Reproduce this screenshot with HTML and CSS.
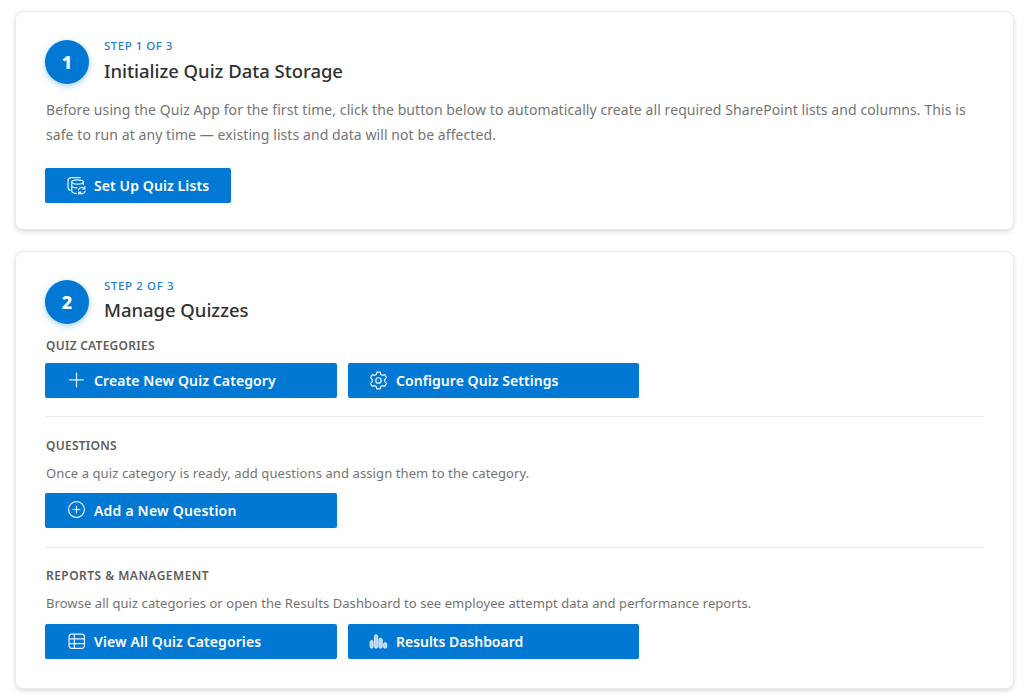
FILE: index.html
```html
<!DOCTYPE html>
<html lang="en">
<head>
<meta charset="utf-8">
<title>Quiz Setup</title>
<link rel="stylesheet" href="styles.css">
</head>
<body>
<main class="page">
  <section class="card card-setup">
    <header class="card-header">
      <div class="badge">1</div>
      <div class="heading">
        <div class="step">STEP 1 OF 3</div>
        <h2 class="title">Initialize Quiz Data Storage</h2>
      </div>
    </header>
    <p class="intro">Before using the Quiz App for the first time, click the button below to automatically create all required SharePoint lists and columns. This is<br>safe to run at any time — existing lists and data will not be affected.</p>
    <button class="btn btn-setup">
      <svg class="icon" viewBox="0 0 18 18"><path d="M12.500 1.500H4.500C2.500 1.500 1 2.700 1 4.500v6.500c0 1.300.7 2.200 2 2.600"/><path d="M15.500 8V5.800M4.500 5.800V14c0 1.500 2 2.400 4.500 2.600M4.500 9.700c.8 1.100 2.700 1.600 5 1.600"/><ellipse cx="10" cy="5.700" rx="5.500" ry="2"/><path d="M10.900 13.200a3.200 3.200 0 0 1 5.600-1.200M16.900 10v2.300h-2.300M17.200 14.200a3.200 3.200 0 0 1-5.700 1.400M11.100 17.400v-2.200h2.200"/></svg>
      <span>Set Up Quiz Lists</span>
    </button>
  </section>

  <section class="card card-manage">
    <header class="card-header">
      <div class="badge">2</div>
      <div class="heading">
        <div class="step step-second">STEP 2 OF 3</div>
        <h2 class="title title-second">Manage Quizzes</h2>
      </div>
    </header>
    <div class="group group-first">
      <h3 class="label">QUIZ CATEGORIES</h3>
      <div class="actions">
        <button class="btn">
          <svg class="icon" viewBox="0 0 18 18"><path d="M9 2v13M2.500 8.500h13"/></svg>
          <span>Create New Quiz Category</span>
        </button>
        <button class="btn btn-right">
          <svg class="icon" viewBox="0 0 18 18"><path d="M7.400 1h3.200l.5 2.300 1.600.9 2.300-.7 1.600 2.800-1.700 1.600v2.200l1.700 1.600-1.600 2.800-2.300-.7-1.600.9-.5 2.300H7.400l-.5-2.300-1.600-.9-2.300.7-1.600-2.800 1.700-1.600V7.900L1.400 6.300 3 3.500l2.300.7 1.600-.9z"/><circle cx="9" cy="9" r="2.600"/></svg>
          <span>Configure Quiz Settings</span>
        </button>
      </div>
    </div>
    <div class="group">
      <h3 class="label">QUESTIONS</h3>
      <p class="note">Once a quiz category is ready, add questions and assign them to the category.</p>
      <div class="actions">
        <button class="btn btn-add">
          <svg class="icon icon-raised" viewBox="0 0 18 18"><circle cx="9" cy="9" r="7.500"/><path d="M9 5.800v6.400M5.800 9h6.400"/></svg>
          <span>Add a New Question</span>
        </button>
      </div>
    </div>
    <div class="group group-reports">
      <h3 class="label label-reports">REPORTS &amp; MANAGEMENT</h3>
      <p class="note note-reports">Browse all quiz categories or open the Results Dashboard to see employee attempt data and performance reports.</p>
      <div class="actions">
        <button class="btn">
          <svg class="icon" viewBox="0 0 18 18"><rect x="2" y="2" width="14.500" height="13.500" rx="2.400"/><path d="M7 2v13.500M2 6.500h14.500M2 11h14.500"/></svg>
          <span>View All Quiz Categories</span>
        </button>
        <button class="btn btn-right btn-results">
          <svg class="icon icon-chart" viewBox="0 0 18 18"><rect x="1" y="8" width="2.900" height="7.300" rx="1.450"/><rect x="5.100" y="2.800" width="3.200" height="12.500" rx="1.500"/><rect x="9.400" y="6" width="3.200" height="9.300" rx="1.500"/><rect x="13.700" y="10.200" width="3.200" height="5.100" rx="1.500"/></svg>
          <span>Results Dashboard</span>
        </button>
      </div>
    </div>
  </section>
</main>
</body>
</html>
```
FILE: styles.css
```css
* { box-sizing: border-box; }
body {
  margin: 0;
  background: #fff;
  font-family: "Noto Sans", "Open Sans", sans-serif;
  color: #323130;
}
h2, h3, p { margin: 0; }
.page {
  display: flex;
  flex-direction: column;
  gap: 21px;
  height: 696px;
  padding: 11px 10px 0 15px;
  overflow: hidden;
}
.card {
  flex: none;
  padding: 28px 29px;
  border: 1px solid #e7e7e7;
  border-radius: 8px;
  box-shadow: 0 2px 4px rgba(0, 0, 0, .14);
}
.card-setup { height: 219px; }
.card-manage { height: 438px; }
.card-header { display: flex; gap: 15px; height: 44px; }
.badge {
  flex: none;
  width: 44px;
  height: 44px;
  border-radius: 50%;
  background: #0078d4;
  color: #fff;
  font-size: 18px;
  font-weight: 800;
  line-height: 45px;
  text-align: center;
  box-shadow: 0 2px 6px rgba(0, 120, 212, .35);
}
.heading { white-space: nowrap; }
.step {
  height: 12px;
  font-size: 11.500px;
  line-height: 11px;
  font-weight: 500;
  letter-spacing: .5px;
  color: #2080d0;
}
.step-second { letter-spacing: .62px; }
.title {
  font-size: 18.500px;
  font-weight: 500;
  line-height: 26px;
  letter-spacing: -.04px;
  margin-top: 6px;
}
.title-second { margin-top: 5px; }
.intro {
  margin-top: 13px;
  padding-left: 1px;
  font-size: 14px;
  line-height: 25px;
  letter-spacing: .078px;
  color: #757575;
  white-space: nowrap;
}
.btn {
  display: flex;
  align-items: center;
  gap: 8px;
  height: 35px;
  padding: 0 22px;
  border: 0;
  border-radius: 2px;
  background: #0078d4;
  color: #fff;
  font: 600 14px/34px "Noto Sans", "Open Sans", sans-serif;
  letter-spacing: .1px;
  white-space: nowrap;
}
.btn-right { padding-left: 21px; letter-spacing: .06px; }
.btn-add { letter-spacing: .2px; }
.btn-results { letter-spacing: -.03px; }
.btn-setup { width: 186px; margin-top: 21px; }
.icon {
  flex: none;
  width: 19px;
  height: 19px;
  fill: none;
  stroke: #e8f3fc;
  stroke-width: 1.150;
  stroke-linecap: round;
  stroke-linejoin: round;
}
.icon-raised { margin-top: -2px; }
.icon-chart { fill: #b9d6f4; stroke: #e3effc; stroke-width: .8; }
.group {
  margin-top: 18px;
  padding-top: 20px;
  border-top: 1px solid #ebebeb;
}
.group-first { margin-top: 0; padding-top: 13px; border-top: 0; }
.group-reports { margin-top: 19px; padding-top: 19px; }
.label {
  height: 18px;
  padding-left: 1px;
  font-size: 12px;
  line-height: 17px;
  font-weight: 600;
  letter-spacing: .26px;
  color: #605e5c;
}
.label-reports { letter-spacing: .47px; }
.note {
  margin-top: 9px;
  height: 20px;
  padding-left: 1px;
  font-size: 13px;
  line-height: 18px;
  letter-spacing: .1px;
  color: #757371;
  white-space: nowrap;
}
.note-reports { letter-spacing: .065px; }
.actions {
  display: grid;
  grid-template-columns: 292px 291px;
  column-gap: 11px;
  margin-top: 9px;
}
.group-first .actions { margin-top: 8px; }
.group-reports .actions { margin-top: 10px; }
```
